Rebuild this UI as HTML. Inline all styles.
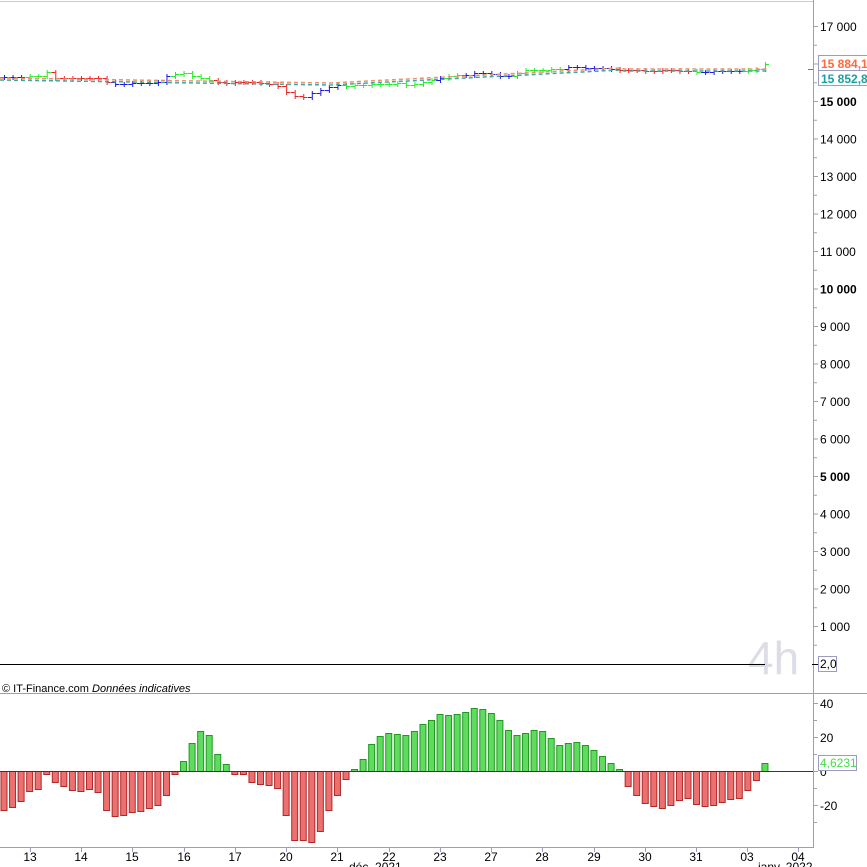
<!DOCTYPE html>
<html><head><meta charset="utf-8"><style>
html,body{margin:0;padding:0;background:#fff;width:867px;height:867px;overflow:hidden}
svg{display:block;font-family:"Liberation Sans",Arial,sans-serif}
</style></head><body>
<svg id="s" width="867" height="867" viewBox="0 0 867 867" xmlns="http://www.w3.org/2000/svg">
<rect width="867" height="867" fill="#fff"/>
<line x1="0" y1="1.5" x2="813" y2="1.5" stroke="#c8c8d8"/>
<line x1="813.5" y1="0" x2="813.5" y2="848" stroke="#9c9cc0"/>
<line x1="0" y1="693.5" x2="867" y2="693.5" stroke="#9c9cc0"/>
<line x1="0" y1="847.5" x2="813" y2="847.5" stroke="#9c9cc0"/>
<text x="748" y="674" font-size="46" fill="#dcdde6">4h</text>
<line x1="0" y1="664.5" x2="765" y2="664.5" stroke="#000"/>
<g id="ax" font-size="12" fill="#000"></g>
<g id="price"></g>
<g id="hist"></g>
<line x1="0" y1="771.5" x2="813" y2="771.5" stroke="#2a2aa0"/>
<text x="2" y="692" font-size="11" fill="#000">© IT-Finance.com <tspan font-style="italic">Données indicatives</tspan></text>
<rect x="818.5" y="55.5" width="52" height="15" fill="#fff" stroke="#9c9cc0"/>
<text x="821" y="68" font-size="12" font-weight="bold" fill="#ff6a3a">15 884,1</text>
<rect x="818.5" y="70.5" width="52" height="15" fill="#fff" stroke="#9c9cc0"/>
<text x="821" y="83" font-size="12" font-weight="bold" fill="#1aa0a0">15 852,8</text>
<line x1="808" y1="69.5" x2="813" y2="69.5" stroke="#1aa0a0"/>
<rect x="818.5" y="656.5" width="18" height="15" fill="#fff" stroke="#9c9cc0"/>
<text x="820" y="668" font-size="12">2,0</text>
<line x1="812" y1="664.5" x2="818" y2="664.5" stroke="#000"/>
<rect x="818.5" y="755.5" width="38" height="15" fill="#fff" stroke="#9c9cc0"/>
<text x="820" y="767" font-size="12" fill="#44dd44">4,6231</text>
<text x="349" y="871" font-size="12">déc. 2021</text>
<text x="758" y="871" font-size="12">janv. 2022</text>
</svg>
<script>
const NS="http://www.w3.org/2000/svg";
function el(p,t,a,txt){const e=document.createElementNS(NS,t);for(const k in a)e.setAttribute(k,a[k]);if(txt!==undefined)e.textContent=txt;p.appendChild(e);return e;}
const ax=document.getElementById('ax');
for(let v=1;v<=17;v++){const y=626-(v-1)*37.5;
 el(ax,'line',{x1:813,y1:y+.5,x2:818,y2:y+.5,stroke:'#9c9cc0'});
 el(ax,'text',{x:820,y:y+5,'font-weight':(v%5==0?'bold':'normal')},v+' 000');
 el(ax,'line',{x1:813,y1:y+19.25,x2:817,y2:y+19.25,stroke:'#9c9cc0'});
}
[[40,703],[20,737],[0,771],[-20,805]].forEach(([v,y])=>{el(ax,'line',{x1:813,y1:y+.5,x2:818,y2:y+.5,stroke:'#9c9cc0'});el(ax,'text',{x:820,y:y+5},String(v));el(ax,'line',{x1:813,y1:y+17.5,x2:817,y2:y+17.5,stroke:'#9c9cc0'});});
const days=[["13",30],["14",81],["15",132],["16",184],["17",235],["20",286],["21",337],["22",389],["23",440],["27",491],["28",542],["29",594],["30",645],["31",696],["03",747],["04",798]];
days.forEach(([t,x])=>{el(ax,'line',{x1:x+.5,y1:848,x2:x+.5,y2:852,stroke:'#9c9cc0'});el(ax,'text',{x:x,y:861,'text-anchor':'middle'},t);});
const h=[810,807,801,791,789,774,782,786,790,791,789,792,810,816,815,812,811,808,805,795,774,761,743,731,735,754,764,774,774,782,784,785,788,815,840,840,842,831,810,795,779,769,759,744,736,733,734,735,731,724,720,714,715,714,712,708,709,713,720,730,735,733,730,731,738,745,743,742,745,750,756,763,769,786,795,803,806,808,805,800,798,804,806,805,802,799,798,790,780,763];
const hg=document.getElementById('hist');
h.forEach((y,i)=>{const cx=4+8.55*i;let top,bh,pos=y<771;if(pos){top=y;bh=771-y;}else{top=771;bh=y-771;}if(bh<2)bh=2;
 el(hg,'rect',{x:cx-3,y:top+.5,width:6,height:bh,fill:pos?'#5fdc5f':'#ec7070',stroke:pos?'#1f9a1f':'#b02828','stroke-width':1});});
const pg=document.getElementById('price');
const P=[77,77,77,76,76,72,78,78,78,78,78,78,82,84,84,83,83,83,82,76,74,73,76,78,80,82,83,82,82,82,83,84,86,92,96,97,93,90,87,85,86,85,85,84,84,84,83,85,84,82,80,78,76,75,75,73,73,74,76,76,73,70,70,70,69,69,67,67,68,68,68,69,70,70,70,71,71,70,70,71,71,72,72,71,71,71,71,70,69,64];
const segs=[[25,'#1a1ae0'],[50,'#22ee22'],[108,'#ee2222'],[168,'#1a1ae0'],[210,'#22ee22'],[310,'#ee2222'],[345,'#1a1ae0'],[432,'#22ee22'],[445,'#1a1ae0'],[465,'#22ee22'],[510,'#1a1ae0'],[560,'#22ee22'],[615,'#1a1ae0'],[690,'#ee2222'],[700,'#22ee22'],[745,'#1a1ae0'],[900,'#22ee22']];
function colAt(x){for(const [e,c] of segs)if(x<e)return c;return '#22ee22';}
let prev=P[0];
P.forEach((y,i)=>{const cx=4+8.55*i;const c=colAt(cx);
 const lo=Math.min(y,prev),hi=Math.max(y,prev);
 el(pg,'line',{x1:cx-4,y1:prev+.5,x2:cx,y2:prev+.5,stroke:c,'stroke-width':1});
 el(pg,'line',{x1:cx+.5,y1:lo-2,x2:cx+.5,y2:hi+3,stroke:c,'stroke-width':1});
 el(pg,'line',{x1:cx,y1:y+.5,x2:cx+4,y2:y+.5,stroke:c,'stroke-width':1});
 prev=y;});
function ma(off,col){let d='';for(let x=0;x<=768;x+=4){let y=78+off+(x<330?(x/330)*5:5-(Math.min(x,620)-330)/290*15)+(x>620?1:0);d+=(x?'L':'M')+x+' '+y.toFixed(1);}
 el(pg,'path',{d:d,fill:'none',stroke:col,'stroke-width':1.5,'stroke-dasharray':'4 3'});}
ma(0,'#f0906a');ma(2,'#3aaaa8');
</script>
</body></html>
